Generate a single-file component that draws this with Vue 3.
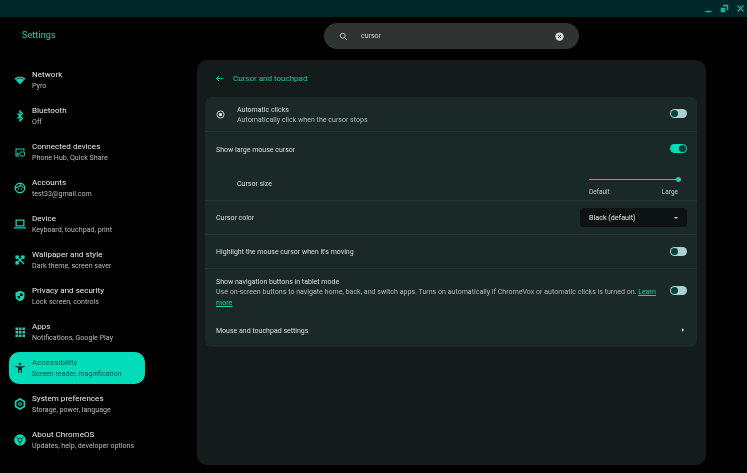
<script setup>
const nav = [
  { t: 'Network', s: 'Pyro', i: 'wifi' },
  { t: 'Bluetooth', s: 'Off', i: 'bt' },
  { t: 'Connected devices', s: 'Phone Hub, Quick Share', i: 'conn' },
  { t: 'Accounts', s: 'test33@gmail.com', i: 'acct' },
  { t: 'Device', s: 'Keyboard, touchpad, print', i: 'dev' },
  { t: 'Wallpaper and style', s: 'Dark theme, screen saver', i: 'wall' },
  { t: 'Privacy and security', s: 'Lock screen, controls', i: 'priv' },
  { t: 'Apps', s: 'Notifications, Google Play', i: 'apps' },
  { t: 'Accessibility', s: 'Screen reader, magnification', i: 'a11y', active: true },
  { t: 'System preferences', s: 'Storage, power, language', i: 'sys' },
  { t: 'About ChromeOS', s: 'Updates, help, developer options', i: 'about' }
]
</script>

<template>
  <div class="app">
    <div class="titlebar">
      <svg class="wb" viewBox="0 0 12 12"><path d="M2 9h8v2H2z" fill="currentColor" /></svg>
      <svg class="wb" viewBox="0 0 12 12"><path d="M4 1h7v7H9V3H4zM1 5h6v6H1z" fill="currentColor" /></svg>
      <svg class="wb" viewBox="0 0 12 12"><path d="M2 2l8 8M10 2l-8 8" stroke="currentColor" stroke-width="1.6" /></svg>
    </div>
    <div class="body">
      <aside class="sidebar">
        <div class="brand">Settings</div>
        <nav class="nav">
          <div v-for="n in nav" :key="n.t" class="item" :class="{ active: n.active }">
            <svg class="ic" viewBox="0 0 24 24">
              <template v-if="n.i === 'wifi'">
                <path d="M12 21 1 9C7.300 3.500 16.700 3.500 23 9z" fill="currentColor" />
                <path d="M5 10.300c4-2.800 10-2.800 14 0" stroke="#000" stroke-width="1.300" fill="none" />
              </template>
              <path v-else-if="n.i === 'bt'" d="M7 7l10 10-5 5V2l5 5L7 17" stroke="currentColor" stroke-width="2.400" fill="none" />
              <template v-else-if="n.i === 'conn'">
                <path d="M3 21V5h18v5h-2V7H5v12h5v2z" fill="currentColor" />
                <rect x="12" y="12" width="9" height="8" rx="1" fill="none" stroke="currentColor" stroke-width="1.800" />
                <circle cx="7.500" cy="16" r="2" fill="currentColor" />
              </template>
              <template v-else-if="n.i === 'acct'">
                <circle cx="12" cy="12" r="9.500" fill="none" stroke="currentColor" stroke-width="2.600" />
                <path d="M3 11c5 0 8-1.500 10-5 2 3 5 5 8 5" fill="none" stroke="currentColor" stroke-width="2.400" />
                <circle cx="9" cy="14" r="1.300" fill="currentColor" />
                <circle cx="15" cy="14" r="1.300" fill="currentColor" />
              </template>
              <path v-else-if="n.i === 'dev'" d="M3 3h18v14H3zM5.500 5.500v9h13v-9zM0 18.500h24V21H0z" fill="currentColor" fill-rule="evenodd" />
              <template v-else-if="n.i === 'wall'">
                <path d="M5 3l16 16-2 2L3 5z" fill="currentColor" />
                <path d="M3 3h7v4H7v3H3zM14 3h7v7h-4V7h-3zM3 14h4v3h3v4H3z" fill="currentColor" />
                <path d="M19 3l2 2L5 21l-2-2z" fill="currentColor" />
              </template>
              <template v-else-if="n.i === 'priv'">
                <path d="M12 1.500 21 5v7c0 5.500-3.800 9.300-9 10.500C6.800 21.300 3 17.500 3 12V5z" fill="currentColor" />
                <path d="M12 6v6H6.500c.4 2.800 2.500 5 5.500 6v-6h5.500V7.800L12 6z" fill="#000" />
              </template>
              <template v-else-if="n.i === 'apps'">
                <path v-for="(p, k) in ['M3 3','M10 3','M17 3','M3 10','M10 10','M17 10','M3 17','M10 17','M17 17']" :key="k" :d="p + 'h5v5H' + p.split(' ')[0].slice(1) + 'z'" fill="currentColor" />
              </template>
              <template v-else-if="n.i === 'a11y'">
                <circle cx="12" cy="4" r="2.500" fill="currentColor" />
                <path d="M3 7.500c6 1.500 12 1.500 18 0l.6 2.400c-2 .6-3.800.9-5.600 1.100V22h-2.600v-6h-2.800v6H8V11c-1.800-.2-3.600-.5-5.600-1.100z" fill="currentColor" />
              </template>
              <template v-else-if="n.i === 'sys'">
                <path d="M12 2l8.700 5v10L12 22l-8.700-5V7z" fill="none" stroke="currentColor" stroke-width="3.400" />
                <circle cx="12" cy="12" r="3" fill="none" stroke="currentColor" stroke-width="2" />
              </template>
              <template v-else>
                <circle cx="12" cy="12" r="11.500" fill="currentColor" />
                <circle cx="12" cy="12" r="4" fill="none" stroke="#000" stroke-width="1.400" />
                <path d="M8 9 4 5M16 9l4-4M12 16v6" stroke="#000" stroke-width="1.400" />
              </template>
            </svg>
            <div class="labels">
              <div class="t">{{ n.t }}</div>
              <div class="s">{{ n.s }}</div>
            </div>
          </div>
        </nav>
      </aside>

      <div class="right">
        <div class="searchrow">
          <div class="search">
            <svg class="sicon" viewBox="0 0 24 24"><circle cx="10" cy="10" r="6.500" fill="none" stroke="currentColor" stroke-width="2.200" /><path d="M15 15l6.500 6.500" stroke="currentColor" stroke-width="2.200" /></svg>
            <span class="q">cursor</span>
            <svg class="clear" viewBox="0 0 24 24"><circle cx="12" cy="12" r="11" fill="#d5dad8" /><path d="M8 8l8 8M16 8l-8 8" stroke="#2f3331" stroke-width="2.600" /></svg>
          </div>
        </div>

        <main class="panel">
          <header class="head">
            <svg class="back" viewBox="0 0 24 24"><path d="M21 12H4M11 5l-7 7 7 7" fill="none" stroke="currentColor" stroke-width="2.400" /></svg>
            <span>Cursor and touchpad</span>
          </header>

          <section class="card">
            <div class="row h34">
              <svg class="clickic" viewBox="0 0 24 24"><circle cx="12" cy="12" r="9.500" fill="none" stroke="currentColor" stroke-width="2.400" /><circle cx="12" cy="12" r="4.500" fill="currentColor" /></svg>
              <div class="grow">
                <div class="lbl">Automatic clicks</div>
                <div class="sub">Automatically click when the cursor stops</div>
              </div>
              <span class="tog" />
            </div>
            <div class="row h35 line">
              <div class="grow lbl">Show large mouse cursor</div>
              <span class="tog on" />
            </div>
            <div class="row h34 size">
              <div class="grow lbl">Cursor size</div>
              <div class="slider">
                <div class="track"><span class="knob" /></div>
                <div class="ends"><span>Default</span><span>Large</span></div>
              </div>
            </div>
            <div class="row h34 line">
              <div class="grow lbl">Cursor color</div>
              <div class="select">
                <span>Black (default)</span>
                <span class="caret" />
              </div>
            </div>
            <div class="row h34 line">
              <div class="grow lbl">Highlight the mouse cursor when it's moving</div>
              <span class="tog" />
            </div>
            <div class="row h45 line">
              <div class="grow">
                <div class="lbl">Show navigation buttons in tablet mode</div>
                <p class="sub wrap"><span>Use on-screen buttons to navigate home, back, and switch apps. Turns on automatically if ChromeVox or automatic clicks is turned on.</span> <a class="link">Learn</a> <a class="link">more</a></p>
              </div>
              <span class="tog" />
            </div>
            <div class="row h34">
              <div class="grow lbl">Mouse and touchpad settings</div>
              <span class="tri" />
            </div>
          </section>
        </main>
      </div>
    </div>
  </div>
</template>

<style>
html, body { margin: 0; background: #000; }
</style>

<style scoped>
.app {
  width: 747px;
  height: 473px;
  overflow: hidden;
  background: #000;
  font-family: Roboto, "Liberation Sans", sans-serif;
  color: #dfe5e3;
  display: flex;
  flex-direction: column;
  filter: blur(0.35px);
}
.titlebar {
  height: 17px;
  background: #01262a;
  display: flex;
  justify-content: flex-end;
  align-items: center;
  gap: 7px;
  padding-right: 2px;
  color: #0fb79c;
}
.wb { width: 9px; height: 9px; }
.body { flex: 1; display: flex; min-height: 0; }
.sidebar { width: 197px; flex: none; }
.brand {
  height: 45px;
  padding-left: 22px;
  line-height: 37px;
  font-size: 9px;
  letter-spacing: 0.1px;
  color: #1fd3ad;
}
.nav { display: flex; flex-direction: column; }
.item {
  width: 136px;
  height: 32px;
  margin: 2px 0 2px 9px;
  border-radius: 10px;
  display: flex;
  align-items: center;
  box-sizing: border-box;
  padding-left: 5px;
  color: #10d6b2;
}
.item.active { background: #03dcb9; color: #06332e; }
.ic { width: 12px; height: 12px; flex: none; margin-right: 6px; }
.t { font-size: 8px; line-height: 11px; color: #e6ebe9; letter-spacing: 0.05px; white-space: nowrap; }
.s { font-size: 7.100px; line-height: 10px; color: #b5bcba; white-space: nowrap; margin-top: 1px; }
.item.active .t { color: #07554a; }
.item.active .s { color: #07554a; }
.right { flex: 1; min-width: 0; padding-right: 41px; display: flex; flex-direction: column; }
.searchrow { height: 43px; padding-top: 6px; box-sizing: border-box; display: flex; padding-left: 127px; }
.search {
  width: 255px;
  height: 26px;
  border-radius: 13px;
  background: #2f3331;
  display: flex;
  align-items: center;
  box-sizing: border-box;
  padding: 0 15px;
}
.sicon { width: 9px; height: 9px; color: #d5dad8; margin-right: 13px; }
.q { flex: 1; font-size: 7px; color: #cfd5d3; }
.clear { width: 9px; height: 9px; }
.panel {
  width: 509px;
  height: 405px;
  background: #141c1b;
  border-radius: 10px;
  box-sizing: border-box;
  padding: 0 9px 0 8px;
}
.head {
  height: 37px;
  display: flex;
  align-items: center;
  padding-left: 10px;
  gap: 9px;
  font-size: 8px;
  color: #1cc7a4;
}
.back { width: 9px; height: 9px; color: #1fd3ad; }
.card {
  background: #1a2827;
  border-radius: 7px;
  overflow: hidden;
  height: 250px;
}
.row {
  display: flex;
  align-items: center;
  padding: 0 10px 0 11px;
  box-sizing: border-box;
}
.line { border-top: 1px solid #243433; }
.h34 { height: 34px; }
.h35 { height: 35px; }
.h45 { height: 45px; }
.size .lbl { padding-left: 21px; }
.clickic { width: 9px; height: 9px; margin-right: 12px; color: #dfe5e3; flex: none; }
.grow { flex: 1; min-width: 0; }
.lbl { font-size: 7px; line-height: 11px; padding-top: 2px; color: #d8dedc; white-space: nowrap; }
.sub { font-size: 7.070px; line-height: 11px; margin: -2px 0 0; color: #aeb7b5; white-space: nowrap; }
.sub.wrap { white-space: normal; padding-right: 10px; }
.link { color: #1fd3ad; text-decoration: underline; }
.tog {
  width: 17px;
  height: 9px;
  border-radius: 5px;
  background: #a8d3cd;
  position: relative;
  flex: none;
  margin-top: -1px;
}
.tog::after {
  content: '';
  position: absolute;
  left: 1px;
  top: 1px;
  width: 7px;
  height: 7px;
  border-radius: 50%;
  background: #083f3d;
}
.tog.on { background: #03dcb9; }
.tog.on::after { left: 9px; background: #0b3f3c; }
.slider { width: 90px; flex: none; margin-right: 8px; padding-top: 9px; }
.track { height: 1.500px; background: #1fcfac; position: relative; margin: 0 -2px 8px 0; }
.knob {
  position: absolute;
  right: 0;
  top: -2px;
  width: 5px;
  height: 5px;
  border-radius: 50%;
  background: #1fcfac;
}
.ends { display: flex; justify-content: space-between; font-size: 6.500px; line-height: 8px; color: #c3cac8; padding-right: 1px; }
.select {
  width: 107px;
  height: 19px;
  background: #0c1312;
  border-radius: 4px;
  display: flex;
  align-items: center;
  justify-content: space-between;
  box-sizing: border-box;
  padding: 0 9px;
  font-size: 7.200px;
  color: #dfe5e3;
}
.caret { border: 2px solid transparent; border-top-color: #c7cdcb; border-bottom-width: 0; }
.tri {
  border: 2px solid transparent;
  border-left-color: #d5dad8;
  border-right-width: 0;
  margin-right: 3px;
}
</style>
